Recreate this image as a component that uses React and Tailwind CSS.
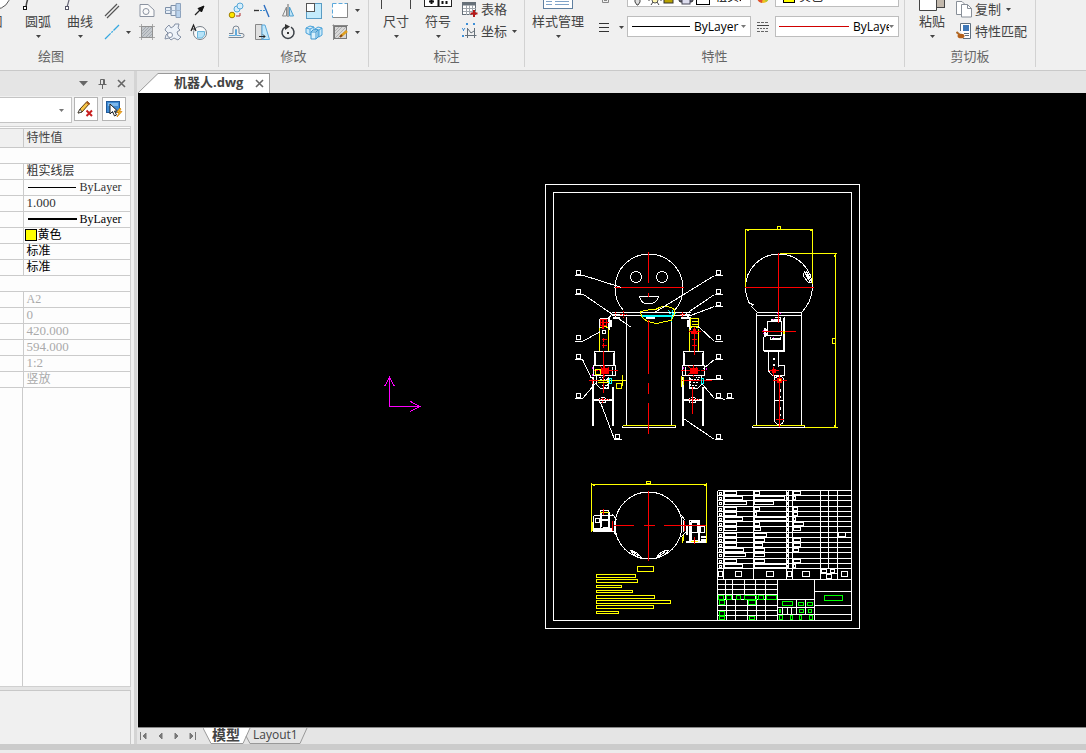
import { useState } from 'react';

const uiFont = "font-['Open_Sans','Noto_Sans_CJK_SC',sans-serif]";
const cellFont = "font-['Liberation_Serif','Noto_Sans_CJK_SC',serif]";

// ---------- ribbon pieces ----------

function Caret({ className = '' }) {
  return (
    <svg width="5" height="3" viewBox="0 0 5 3" className={`shrink-0 text-[#444] ${className}`}>
      <path d="M0 0H5L2.5 3Z" fill="currentColor" />
    </svg>
  );
}

function Icon({ children, w = 18, h = 18 }) {
  return (
    <svg width={w} height={h} viewBox={`0 0 ${w} ${h}`} fill="none" stroke="#6b7480" className="shrink-0">
      {children}
    </svg>
  );
}

const icons = {
  parallel: (
    <Icon>
      <path d="M2 15L14 3M4 17L16 5" stroke="#555" strokeWidth="1.2" />
    </Icon>
  ),
  centerLine: (
    <Icon>
      <path d="M2 16L16 2" stroke="#35a8e0" strokeWidth="1.3" strokeDasharray="8 1 2 1" />
    </Icon>
  ),
  region: (
    <Icon>
      <path d="M2 3.500H10L16 9V15.500H2Z" stroke="#8b93a0" fill="#fafafa" />
      <circle cx="8" cy="10.500" r="3" stroke="#8b93a0" />
    </Icon>
  ),
  hatch: (
    <Icon>
      <rect x="3.500" y="3.500" width="11" height="11" fill="#c4c8cc" stroke="#777" />
      <path d="M4 8L8 4M4 11L11 4M4 14L14 4M8 14L14 8M11 14L14 11" stroke="#a3a9b0" />
      <path d="M1 3.500H17M1 14.500H17M3.500 1V17M14.500 1V17" stroke="#999" strokeWidth="0.8" />
    </Icon>
  ),
  shaft: (
    <Icon>
      <path d="M1.500 6.500H7V12.500H1.500ZM7 4.500H12V14.500H7Z" fill="#e6eef7" stroke="#7e90a8" />
      <path d="M12 2.500H16.500V16.500H12Z" fill="#b9d2ec" stroke="#8ea3bd" />
      <path d="M1 9.500H17" stroke="#9fb2c8" />
    </Icon>
  ),
  gear: (
    <Icon>
      <path d="M2 5L5 2L7 5L10 3L11 1H15L14 5L16 7L13 9L14 12L17 14L14 17L10 15L7 17L5 15L1 16L2 12L4 10L1 7Z" stroke="#8591a5" fill="#edf2f8" />
      <circle cx="6" cy="12" r="2.500" stroke="#8591a5" fill="#fff" />
    </Icon>
  ),
  arrow: (
    <Icon>
      <path d="M5 14L10 9" stroke="#222" strokeWidth="1.2" />
      <path d="M14 5L8 7.500L11.500 11Z" fill="#111" stroke="#111" />
    </Icon>
  ),
  balloon: (
    <Icon>
      <circle cx="10" cy="10" r="6.500" stroke="#777f88" fill="#fafafa" />
      <path d="M7.500 8.500H14.500V12L12 15H7.500Z" fill="#b7e3f8" stroke="#6cb8dd" />
      <path d="M1 8L3.500 2L6 8M2 6H5" stroke="#222" strokeWidth="1.2" />
    </Icon>
  ),
  copyShape: (
    <Icon>
      <circle cx="5" cy="14" r="2.800" fill="#ffe800" stroke="#a08000" />
      <circle cx="10" cy="8" r="3" fill="#d7eefb" stroke="#58a8d8" />
      <circle cx="13" cy="5" r="3" fill="#d7eefb" stroke="#58a8d8" />
      <path d="M9 15H13V12" stroke="#b03030" />
    </Icon>
  ),
  trim: (
    <Icon>
      <path d="M1 9.500H6" stroke="#333" strokeWidth="1.3" />
      <path d="M7 9.500H13" stroke="#3a8fd0" strokeDasharray="2 1" />
      <path d="M11 4L16 16" stroke="#2d6fc0" strokeWidth="1.4" />
    </Icon>
  ),
  mirror: (
    <Icon>
      <path d="M7.500 6V15H3.500Z" stroke="#888" />
      <path d="M10.500 6V15H14.500Z" stroke="#4a9fd0" fill="#bfe3f6" />
      <path d="M9 3V16" stroke="#666" />
    </Icon>
  ),
  scale: (
    <Icon>
      <rect x="1.500" y="2.500" width="15" height="15" fill="#c3ebfc" stroke="#5a9cc4" />
      <rect x="1.500" y="2.500" width="8" height="8" fill="#fff" stroke="#555" />
    </Icon>
  ),
  stretch: (
    <Icon>
      <rect x="1.500" y="2.500" width="15" height="14" fill="#fff" stroke="#5aa8dc" strokeDasharray="4 2" />
      <path d="M16.500 2V16.500H2" stroke="#888" />
    </Icon>
  ),
  offset: (
    <Icon>
      <path d="M1.500 14.500H15A2 2 0 0 0 15 10.500H12V6A3 3 0 0 0 6 6V10.500H2" stroke="#7b8794" />
      <path d="M2 12.500H8.500V6.500H9.500V12.500H14" stroke="#5fa9da" />
    </Icon>
  ),
  taper: (
    <Icon>
      <path d="M2.500 1.500H9V16.500H2.500Z" fill="#e0e0e0" stroke="#888" />
      <path d="M9 2H12L16.500 16.500H9Z" fill="#c3e8fa" stroke="#5aa8dc" />
      <path d="M6 13.500H12M10 11.500L12 13.500L10 15.500" stroke="#222" />
    </Icon>
  ),
  rotate: (
    <Icon>
      <path d="M6 4.200A6 6 0 1 0 12 4.200" stroke="#3a3f45" strokeWidth="1.5" />
      <path d="M6 1L11 3.500L6 7Z" fill="#333" stroke="none" />
      <rect x="8" y="9" width="2" height="2" fill="#333" stroke="none" />
    </Icon>
  ),
  block: (
    <Icon>
      <path d="M1 5L5 3L9 4V10L5 12L1 10ZM1 5L5 6L9 4M5 6V12" stroke="#4aa3da" fill="#c9e9fa" />
      <path d="M10 6L13 4L17 5V12L14 14L10 13ZM10 6L14 7L17 5M14 7V14" stroke="#4aa3da" fill="#c9e9fa" />
      <path d="M6 9L8 7H13V14L11 16H6ZM6 9H11V16M11 9L13 7" stroke="#3f97cf" fill="#d9f0fc" />
    </Icon>
  ),
  editHatch: (
    <Icon>
      <rect x="3.500" y="3.500" width="12" height="12" fill="#d8d8d8" stroke="#777" />
      <path d="M4 8L8 4M4 11L11 4M4 15L15 4M7 15L15 7" stroke="#b0b0b0" />
      <path d="M1.500 2.500H17M2.500 1.500V17" stroke="#888" />
      <path d="M10 13L16 8" stroke="#e0a020" strokeWidth="2.500" />
      <path d="M9 14L11 12" stroke="#8a4b12" strokeWidth="2" />
    </Icon>
  ),
  table: (
    <Icon w={16} h={16}>
      <rect x="0.500" y="1.500" width="13" height="12" fill="#fff" stroke="#667079" />
      <path d="M1 3H14" stroke="#667079" strokeWidth="3" />
      <path d="M1 7.500H14M1 10.500H14M4.500 4V14M7.500 4V14M10.500 4V14" stroke="#a0a6ac" />
      <path d="M12 9V16M8.500 12.500H15.500" stroke="#b81818" strokeWidth="2" />
    </Icon>
  ),
  coord: (
    <Icon w={16} h={16}>
      <path d="M5.500 5V15M3 12.500H14.500M12.500 5V15M6 6L9 10L12 8" stroke="#667079" />
      <path d="M4 0L6 2M6 0L4 2M11 0L13 2M13 0L11 2M0 5L1.500 7L3 5M1.500 7V8M0 12L2 14M2 12L0 14" stroke="#3d8fd8" />
    </Icon>
  ),
  copy: (
    <Icon w={16} h={18}>
      <path d="M0.500 1.500H6L9 4.500V14.500H0.500Z" fill="#fff" stroke="#888f98" />
      <path d="M5.500 4.500H11.500L15.500 8.500V17H5.500Z" fill="#fff" stroke="#888f98" />
      <path d="M11.500 4.500V8.500H15.500" stroke="#888f98" />
    </Icon>
  ),
  match: (
    <Icon w={16} h={16}>
      <path d="M4.500 8V0.500H14.500V15.500H7" fill="#fff" stroke="#60707f" />
      <rect x="7" y="2" width="6" height="6" fill="#3f78b8" stroke="none" />
      <path d="M8 10.500H13M9 12.500H13" stroke="#60707f" />
      <path d="M0.500 9L4 12" stroke="#b06a28" strokeWidth="2" />
      <ellipse cx="5" cy="13" rx="3.500" ry="2.300" fill="#b5611a" stroke="none" />
    </Icon>
  ),
};

function IconButton({ name, label, wide = 'w-[26px]' }) {
  return (
    <button aria-label={label} className={`flex h-[22px] ${wide} items-center justify-center pb-px hover:bg-[#dcebf8]`}>
      {icons[name]}
    </button>
  );
}

function BigButton({ label, icon, wide = 'w-[42px]', caret = true }) {
  return (
    <button className={`flex h-[56px] ${wide} shrink-0 flex-col items-center justify-end pb-[5px] text-[13px] text-[#444]`}>
      {icon}
      <span className="leading-5 whitespace-nowrap">{label}</span>
      <Caret className={caret ? 'mt-1' : 'invisible mt-1'} />
    </button>
  );
}

function TextButton({ name, label, caret }) {
  return (
    <button className="flex h-[22px] items-center gap-[3px] pb-[2px] text-[13px] leading-5 whitespace-nowrap text-[#444]">
      {icons[name]}
      <span>{label}</span>
      {caret && <Caret className="ml-[2px]" />}
    </button>
  );
}

function Group({ title, className = '', children }) {
  return (
    <>
      <section className={`flex h-[70px] shrink-0 flex-col justify-end ${className}`}>
        <div className="flex h-11 items-end">{children}</div>
        <h2 className="h-[27px] text-center text-[13px] leading-[27px] text-[#666]">{title}</h2>
      </section>
      <div className="h-[67px] w-px shrink-0 bg-[#d2d2d2]" />
    </>
  );
}

function Combo({ label, lead, options }) {
  return (
    <div className="flex h-[21px] w-[124px] shrink-0 items-center border border-[#bdbdbd] bg-white pr-1 pl-[3px]">
      {lead}
      <select
        aria-label={label}
        className="h-[19px] min-w-0 flex-1 appearance-none bg-transparent pl-1 text-[12px] text-black outline-none"
      >
        {options.map((o) => (
          <option key={o}>{o}</option>
        ))}
      </select>
      <Caret className="text-[#777]" />
    </div>
  );
}

function Ribbon() {
  return (
    <header className="flex h-[71px] shrink-0 items-start overflow-hidden border-b border-[#c9c9c9] bg-[#f0f0f0]">
      <Group title="绘图" className="-ml-[116px] w-[334px]">
        <div className="flex flex-1 items-end justify-end pr-[6px]">
          <BigButton
            label="圆"
            caret={false}
            icon={
              <svg width="30" height="30" viewBox="0 0 30 30" className="shrink-0">
                <circle cx="15" cy="14" r="14" fill="#fff" stroke="#555" />
              </svg>
            }
          />
          <BigButton
            label="圆弧"
            icon={
              <svg width="30" height="24" viewBox="0 0 30 24" className="shrink-0">
                <path d="M3 20Q4 8 14 0" fill="none" stroke="#444" strokeWidth="1.5" />
                <rect x="0.500" y="19.500" width="3" height="3" fill="#fff" stroke="#111" />
              </svg>
            }
          />
          <BigButton
            label="曲线"
            icon={
              <svg width="30" height="24" viewBox="0 0 30 24" className="shrink-0">
                <path d="M2 20Q4 14 6 4" fill="none" stroke="#667" strokeWidth="1.2" />
                <rect x="0.500" y="19.500" width="3" height="3" fill="#fff" stroke="#556" />
              </svg>
            }
          />
          <div className="flex flex-col">
            <div className="flex">
              <IconButton name="parallel" label="平行线" wide="w-[22px]" />
              <span className="w-[11px]" />
              <IconButton name="region" label="面域" />
              <IconButton name="shaft" label="轴" />
              <IconButton name="arrow" label="箭头" />
            </div>
            <div className="flex items-center">
              <IconButton name="centerLine" label="中心线" wide="w-[22px]" />
              <span className="flex w-[11px] justify-center">
                <Caret />
              </span>
              <IconButton name="hatch" label="剖面线" />
              <IconButton name="gear" label="齿轮" />
              <IconButton name="balloon" label="局部放大" />
            </div>
          </div>
        </div>
      </Group>

      <Group title="修改" className="w-[149px]">
        <div className="flex flex-col pl-1">
          <div className="flex items-center">
            <IconButton name="copyShape" label="平移复制" />
            <IconButton name="trim" label="裁剪" />
            <IconButton name="mirror" label="镜像" />
            <IconButton name="scale" label="缩放" />
            <IconButton name="stretch" label="拉伸" />
            <Caret className="ml-[2px]" />
          </div>
          <div className="flex items-center">
            <IconButton name="offset" label="等距线" />
            <IconButton name="taper" label="延伸" />
            <IconButton name="rotate" label="旋转" />
            <IconButton name="block" label="阵列" />
            <IconButton name="editHatch" label="编辑" />
            <Caret className="ml-[2px]" />
          </div>
        </div>
      </Group>

      <Group title="标注" className="w-[155px]">
        <div className="flex items-end pl-[6px]">
          <BigButton
            label="尺寸"
            icon={
              <svg width="32" height="24" viewBox="0 0 32 24" className="shrink-0">
                <path d="M1.500 2V22M30.500 2V22" stroke="#444" />
              </svg>
            }
          />
          <BigButton
            label="符号"
            icon={
              <svg width="28" height="24" viewBox="0 0 28 24" className="mb-[2px] shrink-0">
                <rect x="0.500" y="4.500" width="27" height="17" fill="#fff" stroke="#222" />
                <path d="M14.500 5V21M7.500 14V19M5 16.500H10M18.500 16V19M22.500 16V19" stroke="#111" strokeWidth="2" />
              </svg>
            }
          />
          <div className="flex flex-col pl-[3px]">
            <TextButton name="table" label="表格" />
            <TextButton name="coord" label="坐标" caret />
          </div>
        </div>
      </Group>

      <Group title="特性" className="w-[379px]">
        <BigButton
          label="样式管理"
          wide="w-[66px]"
          icon={
            <svg width="30" height="24" viewBox="0 0 30 24" className="shrink-0">
              <rect x="0.500" y="2.500" width="29" height="19" fill="#fff" stroke="#5f7fa0" />
              <path d="M3 14.500H9M3 17.500H9M12 14.500H26M12 17.500H26" stroke="#7fa3c8" />
            </svg>
          }
        />
        <div className="flex h-11 w-9 shrink-0 flex-col items-center justify-end gap-5 pb-[11px]">
          <svg width="22" height="7" viewBox="0 0 22 7" className="shrink-0">
            <path d="M4.500 0V6.500H10.500V0M6 2.500H9M6 4.500H9" fill="none" stroke="#888" />
          </svg>
          <button aria-label="线宽" className="flex h-[9px] shrink-0 items-center gap-[10px] pl-1">
            <svg width="10" height="9" viewBox="0 0 10 9">
              <path d="M0 0.500H10M0 4.500H10M0 8.500H10" stroke="#333" />
            </svg>
            <Caret />
          </button>
        </div>
        <div className="flex h-11 shrink-0 flex-col justify-end gap-[9px] pb-[6px]">
          <Combo
            label="图层"
            options={['粗实线层']}
            lead={
              <svg width="80" height="19" viewBox="0 0 80 19" className="shrink-0">
                <path d="M4 11H9V15L7 18H6L4 15Z" fill="#ddd" stroke="#444" />
                <path d="M24 8V10M19 13H17M31 13H29M20 18L22 15M28 18L26 15" stroke="#444" />
                <circle cx="24" cy="13" r="3" fill="#fff6b0" stroke="#555" />
                <rect x="33" y="8" width="9" height="8" fill="#b9a300" stroke="#333" />
                <rect x="48" y="8" width="14" height="7" rx="2" fill="#667" stroke="#333" />
                <rect x="51" y="12" width="8" height="5" fill="#dde" stroke="#445" />
                <rect x="65.500" y="4.500" width="13" height="13" fill="#fff" stroke="#000" />
              </svg>
            }
          />
          <Combo
            label="线型"
            options={['ByLayer']}
            lead={
              <svg width="59" height="3" viewBox="0 0 59 3" className="shrink-0">
                <path d="M1 1.500H59" stroke="#000" />
              </svg>
            }
          />
        </div>
        <div className="flex h-11 w-6 shrink-0 flex-col items-center justify-end gap-[18px] pb-[10px]">
          <svg width="12" height="12" viewBox="0 0 12 12" className="shrink-0">
            <circle cx="6" cy="6" r="6" fill="#f0c020" />
            <path d="M6 6L0 6A6 6 0 0 0 5 12Z" fill="#e05030" />
            <path d="M6 6L9 11A6 6 0 0 0 12 7Z" fill="#a8c838" />
          </svg>
          <svg width="12" height="12" viewBox="0 0 12 12" className="shrink-0">
            <path d="M0 1.500H12M0 10.500H12" stroke="#666" strokeDasharray="3 1" />
            <path d="M0 4.500H12" stroke="#444" />
            <path d="M0 7.500H12" stroke="#666" strokeDasharray="2 1" />
          </svg>
        </div>
        <div className="flex h-11 shrink-0 flex-col justify-end gap-[9px] pb-[6px]">
          <Combo
            label="颜色"
            options={['黄色']}
            lead={<span className="ml-1 size-3 shrink-0 border border-black bg-[#ffff00]" />}
          />
          <Combo
            label="线色"
            options={['ByLayer']}
            lead={
              <svg width="70" height="3" viewBox="0 0 70 3" className="shrink-0">
                <path d="M0 1.500H70" stroke="#d00000" />
              </svg>
            }
          />
        </div>
      </Group>

      <Group title="剪切板" className="w-[130px]">
        <div className="flex items-end pl-[6px]">
          <BigButton
            label="粘贴"
            icon={
              <svg width="26" height="24" viewBox="0 0 26 24" className="shrink-0">
                <rect x="16" y="0" width="9.500" height="20.500" fill="#c2b8ac" stroke="#444" />
                <path d="M0.500 0V23.500H17.500V0" fill="#fff" stroke="#444" />
              </svg>
            }
          />
          <div className="flex flex-col pl-[3px]">
            <TextButton name="copy" label="复制" caret />
            <TextButton name="match" label="特性匹配" />
          </div>
        </div>
      </Group>
    </header>
  );
}

// ---------- property panel ----------

const props = [
  null,
  { name: '图层', value: '粗实线层', tone: 'text-[#333]' },
  { name: '线型', line: 1, value: 'ByLayer', tone: 'text-[#333]' },
  { name: '比例', value: '1.000', tone: 'text-[#333]', num: true },
  { name: '线宽', line: 2, value: 'ByLayer', tone: 'text-black' },
  { name: '颜色', swatch: true, value: '黄色', tone: 'text-black' },
  { name: '文本风格', value: '标准', tone: 'text-black' },
  { name: '标注风格', value: '标准', tone: 'text-black' },
  null,
  { name: '图幅', value: 'A2', tone: 'text-[#aaa]' },
  { name: '加长', value: '0', tone: 'text-[#aaa]', num: true },
  { name: '高度', value: '420.000', tone: 'text-[#aaa]', num: true },
  { name: '宽度', value: '594.000', tone: 'text-[#aaa]', num: true },
  { name: '图纸比例', value: '1:2', tone: 'text-[#aaa]', num: true },
  { name: '方向', value: '竖放', tone: 'text-[#aaa]' },
];

function PropertyPanel() {
  return (
    <aside className="flex w-[134px] shrink-0 flex-col bg-[#f0f0f0]">
      <div className="flex h-[25px] shrink-0 items-center justify-end gap-[10px] bg-[#e5e5e5] pr-2 text-[#666]">
        <button aria-label="菜单">
          <svg width="9" height="5" viewBox="0 0 9 5" className="block">
            <path d="M0 0H9L4.500 5Z" fill="currentColor" />
          </svg>
        </button>
        <button aria-label="固定">
          <svg width="9" height="10" viewBox="0 0 9 10" className="block" fill="none" stroke="currentColor">
            <path d="M2.500 0.500H6.500V5.500H2.500ZM5.500 0V5M0.500 5.500H8.500M4.500 6V10" />
          </svg>
        </button>
        <button aria-label="关闭">
          <svg width="9" height="9" viewBox="0 0 9 9" className="block" fill="none" stroke="currentColor" strokeWidth="1.6">
            <path d="M1 1L8 8M8 1L1 8" />
          </svg>
        </button>
      </div>

      <div className="flex shrink-0 items-start gap-[2px] pt-px pr-2 pb-[3px]">
        <div className="flex h-[26px] min-w-0 flex-1 items-center border border-l-0 border-[#c4c4c4] bg-white pr-[7px]">
          <select aria-label="选择对象" className="h-6 min-w-0 flex-1 appearance-none bg-transparent outline-none">
            <option></option>
          </select>
          <Caret className="text-[#777]" />
        </div>
        <button aria-label="取消选择" className="flex size-6 shrink-0 items-center justify-center border border-[#b4b4b4] bg-white">
          <svg width="18" height="18" viewBox="0 0 18 18" className="shrink-0">
            <path d="M1 13L3 9L10 1.500L12.500 3.500L5 12Z" fill="#f7c545" stroke="#5a3a10" />
            <path d="M9.500 2L12.500 4.500" stroke="#a85a20" strokeWidth="2" />
            <path d="M1 13L3 9L5 12Z" fill="#fff" stroke="#333" strokeWidth="0.800" />
            <path d="M9.500 10.500L15 16M15 10.500L9.500 16" stroke="#c81e1e" strokeWidth="2" />
          </svg>
        </button>
        <button aria-label="快速选择" className="ml-[2px] flex size-6 shrink-0 items-center justify-center border border-[#b4b4b4] bg-white">
          <svg width="18" height="18" viewBox="0 0 18 18" className="shrink-0">
            <rect x="1.500" y="1.500" width="13" height="11" fill="#3f8bd4" stroke="#1f5a9c" />
            <rect x="3" y="3" width="10" height="3" fill="#7db8ec" />
            <path d="M5 4V14L7.500 11.500L9.500 16L11.500 15L9.500 11H12.500Z" fill="#fff" stroke="#222" />
            <path d="M15 8L11.500 12.500H14L12 17L17 11.500H14.500L16 9Z" fill="#ffc020" stroke="#d07a00" strokeWidth="0.700" />
          </svg>
        </button>
      </div>

      <div className="mr-[3px] flex min-h-0 flex-1 flex-col border-t border-r border-[#d0d0d0] bg-[#fdfdfd] pt-px">
        <table className={`w-full table-fixed border-collapse text-[12px] leading-[14px] ${cellFont}`}>
          <colgroup>
            <col className="w-[23px]" />
            <col />
          </colgroup>
          <thead>
            <tr className="h-[19px] bg-[#f0f0f0] text-left text-[#444]">
              <th className="border-t border-r border-b border-[#c8c8c8] p-0" />
              <th className="border-t border-b border-[#c8c8c8] p-0 pl-[3px] font-normal">特性值</th>
            </tr>
          </thead>
          <tbody>
            {props.map((row, i) =>
              row ? (
                <tr key={row.name} className={`h-4 ${row.tone}`}>
                  <td className="border-r border-b border-[#cbcbcb] p-0" />
                  <td className="border-b border-[#cbcbcb] p-0 pl-px">
                    <div className="flex h-[15px] items-center pb-px whitespace-nowrap">
                      {row.line && (
                        <svg width="50" height="3" viewBox="0 0 50 3" className="mr-px ml-[2px] shrink-0">
                          <path d={row.line === 1 ? 'M1 1.500H49' : 'M1 1H50'} stroke="#000" strokeWidth={row.line} />
                        </svg>
                      )}
                      {row.swatch && <span className="-mr-px size-3 shrink-0 border border-black bg-[#ffff00]" />}
                      <span className={row.num ? 'ml-[2px] text-[13px]' : 'ml-[2px]'}>{row.value}</span>
                    </div>
                  </td>
                </tr>
              ) : (
                <tr key={i} className="h-4">
                  <td colSpan={2} className="border-b border-[#cbcbcb] p-0" />
                </tr>
              )
            )}
          </tbody>
        </table>
        <div className="w-[23px] flex-1 border-r border-[#cbcbcb]" />
      </div>
      <div className="mr-[3px] h-1 shrink-0 border-t border-[#d0d0d0] bg-[#e5e5e5]" />
      <div className="mr-[3px] h-[54px] shrink-0 border-t border-r border-[#c8c8c8]" />
    </aside>
  );
}

// ---------- drawing ----------

// callout: box position, underline y, leader start x, leader to the part
const callouts = [
  [576, 270, 583, 275, 621, 287],
  [576, 289, 583, 294, 631, 327],
  [576, 335, 582, 341, 600, 331],
  [576, 354, 582, 359, 591, 378],
  [576, 393, 582, 398, 595, 383],
  [615, 434, 614, 439, 600, 402],
  [716, 270, 714, 275, 654, 312],
  [716, 289, 714, 294, 686, 313],
  [716, 302, 714, 306, 690, 315],
  [716, 335, 714, 341, 698, 326],
  [716, 354, 714, 359, 703, 368],
  [716, 375, 714, 379, 705, 379],
  [716, 393, 714, 398, 702, 384],
  [716, 434, 714, 439, 683, 418],
];

const notes = [
  [574, 39, 3],
  [579, 41, 3],
  [585, 25, 2],
  [590, 36, 2],
  [595, 58, 3],
  [600, 74, 3],
  [605, 57, 3],
  [611, 22, 2],
];

// parts list: end x of the text block in each of the three text columns
const parts = [
  [736, 759, 800],
  [742, 784, 795],
  [746, 773, 0],
  [736, 759, 797],
  [736, 756, 797],
  [742, 786, 795],
  [736, 759, 803],
  [736, 760, 800],
  [736, 766, 0],
  [736, 764, 800],
  [736, 762, 800],
  [743, 764, 798],
  [745, 764, 0],
  [736, 764, 800],
  [742, 786, 795],
];

const greens = [
  [718, 595, 5, 4], [726, 595, 5, 4], [736, 595, 4, 4], [744, 595, 12, 4], [758, 595, 5, 4], [766, 595, 10, 4],
  [719, 600, 5, 4], [748, 600, 7, 4], [719, 611, 5, 4], [719, 616, 5, 3], [749, 616, 5, 3],
  [782, 601, 10, 4], [798, 602, 5, 3], [807, 602, 5, 3], [779, 609, 1, 3], [799, 609, 4, 3], [808, 609, 3, 3],
  [779, 615, 3, 4], [790, 615, 2, 4], [799, 615, 2, 4], [809, 615, 3, 4], [824, 595, 18, 5],
];

function Arm({ flip }) {
  return (
    <g transform={flip ? 'translate(1297 0) scale(-1 1)' : undefined}>
      <path d="M599 318H608M599 318V327M611 314L608 318" stroke="#fff" />
      <path d="M608 316V329M610 319V326" stroke="#fff" strokeWidth="2" />
      <path d="M599 328V351M608 328V351M599 328Q604 324 608 328" stroke="#ff0" />
      <path d="M594 351H614V365H594ZM595 352V365M613 352V365" stroke="#fff" />
      <path d="M593 365H615V375H593ZM612 366V375M596 375V384L600 388H608V376" stroke="#fff" />
      <path d="M599 379H607M600 382H606M601 385H607M598 377H602M603 387H608M599 375H608M607 377V387" stroke="#fff" strokeDasharray="2 1" />
      <rect x="600" y="367" width="8" height="6" fill="#f00" stroke="none" />
      <path d="M593 370H618M604 364V376M600 366L609 374M609 366L600 374" stroke="#f00" strokeDasharray="4 1" />
      <path d="M601 339H606M603 337V341M601 345H606M603 342V347" stroke="#f00" />
    </g>
  );
}

// pair of fingers below each forearm
function Legs({ x }) {
  return (
    <g stroke="#fff">
      <path d={`M${x} 376V425M${x + 1} 376V425M${x + 20} 386V425M${x + 21} 386V425`} />
      <path d={`M${x} 399H${x + 20}M${x} 400H${x + 20}`} />
      <path d={`M${x + 7} 397V402M${x + 13} 397V402M${x + 8} 397H${x + 12}M${x + 8} 402H${x + 12}`} />
      <path d={`M${x + 6} 399H${x + 16}M${x + 10} 397V403`} stroke="#f00" strokeDasharray="2 1" />
    </g>
  );
}

function Robot() {
  return (
    <>
      {/* front view */}
      <path d="M623 310A34 34 0 1 1 674 310" stroke="#fff" />
      <circle cx="635.500" cy="276.500" r="5.500" stroke="#fff" />
      <circle cx="661.500" cy="276.500" r="5.500" stroke="#fff" />
      <path d="M639 296H658Q657 303 648 303.500Q640 303 639 296Z" stroke="#fff" />
      <path d="M626 316V425M671 316V425M622 427H675M622 425V427M675 425V427" stroke="#fff" />
      <path d="M622 425H675" stroke="#ff0" />
      <path d="M611 312H690M611 315H690" stroke="#fff" />
      <path d="M611 314H622M645 317H654M679 314H689M612 317H619M680 317H688" stroke="#fff" strokeWidth="2" />
      <path d="M615 311V317M623 310V317M682 311V317M619 314H626M679 314H686" stroke="#f00" strokeDasharray="2 1" />
      <path d="M641 315H671M641 316H671M671 315V321" stroke="#0ff" />
      <path d="M668 310L675 315M668 313H675M672 309V316" stroke="#0ff" strokeDasharray="2 1" />
      <path d="M640 311Q648 309 655 309Q663 304 670 307Q676 309 674 313Q672 318 671 320Q663 321 657 323Q645 322 641 316Z" stroke="#ff0" />
      <path d="M648 251V282M648 292V296M614 287H683M648 319V373M648 382V393M648 402V433" stroke="#f00" />

      <Arm />
      <Arm flip />
      <Legs x={592} />
      <Legs x={682} />
      <rect x="600" y="319" width="6" height="6" stroke="#f00" />
      <path d="M599 322H608M602 318V328M603 318V328M603 350V371M603 371V392" stroke="#f00" />
      <rect x="602" y="330" width="3" height="3" stroke="#fff" />
      <rect x="690" y="318" width="8" height="8" stroke="#ff0" />
      <path d="M691 321H697M691 324H697" stroke="#ff0" />
      <path d="M694 326V354M688 331H700M694 328L691 333H697Z" fill="#f00" stroke="#f00" />
      <path d="M588 380H610M592 383V378M681 380H711M692 386V413" stroke="#f00" />
      <path d="M597 380H625M597 382H608M622 374V385M595 369H600V374H595ZM616 383H621V388H616Z" stroke="#ff0" />
      <path d="M681 375V386M683 376V384" stroke="#ff0" />
      <path d="M609 378H611V383H609ZM701 378H703V383H701Z" stroke="#0ff" />
      <path d="M592 366V368M592 373V375M683 366V368M706 367V369" stroke="#f0f" />

      {/* side view */}
      <path d="M757 312L751 306L753 304L749 303A34 34 0 0 1 745 287A33.500 33.500 0 0 1 812 287Q811 302 801 312" stroke="#fff" />
      <path d="M803 273V276L808 282H811L809 277L806 271ZM805 273L810 282M807 275L811 281M804 271L808 279" stroke="#fff" />
      <path d="M756 312H801M756 315H801M756 312V425M801 312V425M752 427H804M752 425V427M804 425V427" stroke="#fff" />
      <path d="M752 425H804" stroke="#ff0" />
      <path d="M763 336V350H784V316M763 351H784M783 317V350M767 321H781V335H767ZM774 317H780V320M770 336V339H780V336" stroke="#fff" />
      <path d="M770 319H780M771 338H780M764 327V336M783 326V336" stroke="#fff" strokeWidth="2" />
      <path d="M766 328V335" stroke="#fff" strokeWidth="2" strokeDasharray="3 1" />
      <path d="M768 351V370Q770 375 774 375H778M778 351V366M778 365H784V375H778" stroke="#fff" />
      <path d="M773 357V359M773 363V365" stroke="#fff" strokeWidth="2" />
      <path d="M774 375V420Q775 424 779 424Q783 423 783 420V378Q779 373 774 378M774 400H783M780 388V391M780 395V397M780 406V409M780 413V415" stroke="#fff" />
      <rect x="777" y="226" width="3" height="3" stroke="#ff0" />
      <rect x="832" y="338" width="3" height="5" stroke="#ff0" />
      <path d="M745 229H812M745 228V287M812 228V283M779 253H836M835 253V427M804 427H837M746 230H748M809 230H811M834 254V256M834 424V426" stroke="#ff0" />
      <path d="M744 287H813M778 252V322M761 331H795M768 370H778M773 366V375M772 380H786M779 374V426M775 419H783" stroke="#f00" />
      <path d="M772 369H775V372H772ZM777 378H781V382H777Z" fill="#f00" stroke="#f00" />
      <path d="M778 379H780M783 330V333" stroke="#ff0" strokeWidth="2" />
      <path d="M772 319H774M772 337H774M763 329V334M776 313H782" stroke="#f0f" strokeDasharray="1 2" />

      {/* top view */}
      <circle cx="648" cy="525" r="33.500" stroke="#fff" />
      <path d="M630 550Q635 550 641 557Q634 557 630 550ZM632 551L639 556M668 550Q660 550 656 557Q664 556 668 550ZM665 551L658 556" stroke="#fff" />
      <path d="M593 515H613M593 515V531H612M600 510H608V531H600ZM602 519H607M602 527H607M612 514L617 520M613 531L617 537" stroke="#fff" />
      <path d="M593 528H612M593 530H612M600 512V526M608 511V528M600 519H608" stroke="#fff" strokeWidth="2" />
      <path d="M595 518H599V522H595ZM614 520V531" stroke="#fff" />
      <path d="M689 520H699V540H689ZM691 522H697V532H691ZM700 526H704V532H700ZM680 514L685 520M680 537L685 532M683 519V531" stroke="#fff" />
      <path d="M685 541H706M700 536H706M700 539H706M690 521H699M690 521V540M698 521V540M686 524V534" stroke="#fff" strokeWidth="2" />
      <rect x="646" y="481" width="4" height="2" stroke="#ff0" />
      <path d="M591 484H706M591 482V531M706 482V542M592 485H594M703 485H705M599 512H608M592 521V530M682 536V542M683 534V540M690 541H697" stroke="#ff0" />
      <path d="M648 490V560M613 525H633M643 525H654M663 525H705M603 508V514M612 520V530M684 520V530M694 536V543" stroke="#f00" />

      {callouts.map(([x, y, lx, ly, tx, ty]) => (
        <g key={`${x}-${y}`} stroke="#fff">
          <rect x={x} y={y} width="4" height={ly - y > 5 ? 4 : ly - y - 1} />
          <path d={`M${x - 2} ${ly}H${x + 6}M${lx} ${ly}L${tx} ${ty}`} />
        </g>
      ))}
      <path d="M727 393H731V397H727ZM725 398H733M722 398L725 400" stroke="#fff" />
    </>
  );
}

function TitleBlock() {
  const rowY = (i) => Math.round(490 + i * 5.2);
  return (
    <>
      <g stroke="#fff">
        {parts.map(([a, b, c], i) => (
          <g key={i}>
            <path d={`M717 ${rowY(i)}H851`} />
            <rect x="719" y={rowY(i) + 2} width="2" height="2" />
            <rect x="724" y={rowY(i) + 1} width={a - 724} height="3" />
            <rect x="754" y={rowY(i) + 1} width={b - 754} height="3" />
            <rect x="787" y={rowY(i) + 2} width="1" height="2" />
            {c > 0 && <rect x="793" y={rowY(i) + 1} width={c - 793} height="3" />}
          </g>
        ))}
        <rect x="838" y="532" width="7" height="4" />
        <path d="M717 568H851M717 579H851M717 490V620M723 490V579M753 490V579M786 490V579M788 490V568M792 490V579M820 490V579M828 490V568M837 490V579" />
        <path d="M718 571H722V576H718ZM735 571H741V576H735ZM766 571H773V576H766ZM787 571H791V576H787ZM802 571H809V576H802ZM841 571H847V576H841ZM821 569H826V572H821ZM830 569H834V572H830ZM826 574H831V578H826ZM820 573H837" />
        <path d="M717 584H777M717 589H777M717 594H777M717 599H814M717 605H777M717 610H777M717 615H777M777 579V620M814 579V620" />
        <path d="M725 579V599M732 579V599M744 579V599M755 579V599M765 579V620M726 599V620M735 599V620M747 599V620M756 599V620" />
        <path d="M777 607H814M777 614H851M796 599V614M805 599V614M782 607V614M787 607V614M791 607V614M814 591H851M814 605H851" />
      </g>
      <g stroke="#0f0">
        {greens.map(([x, y, w, h]) => (
          <rect key={`${x}-${y}`} x={x} y={y} width={w} height={h} />
        ))}
      </g>
    </>
  );
}

function Canvas() {
  return (
    <div className="min-h-0 flex-1 bg-black">
      <svg
        className="block h-full w-full"
        viewBox="138 93 948 634"
        preserveAspectRatio="xMidYMid meet"
        fill="none"
        shapeRendering="crispEdges"
        role="img"
        aria-label="机器人"
      >
        <g transform="translate(0.5 0.5)">
          <g stroke="#fff">
            <rect x="545" y="184" width="314" height="444" />
            <rect x="553" y="192" width="298" height="428" />
          </g>
          <path d="M389 377V406H419M384 386L389 377L394 386M410 401L419 406L410 411" stroke="#f0f" />
          <Robot />
          <g stroke="#ff0">
            <rect x="637" y="566" width="16" height="5" />
            {notes.map(([y, w, h]) => (
              <rect key={y} x="596" y={y} width={w} height={h} />
            ))}
          </g>
          <TitleBlock />
        </g>
      </svg>
    </div>
  );
}

function SheetTabs() {
  const [active, setActive] = useState('模型');
  const arrows = [
    ['首页', 'M1.500 1V9M7 2V8L4 5Z'],
    ['上一页', 'M7 2V8L4 5Z'],
    ['下一页', 'M4 2V8L7 5Z'],
    ['末页', 'M8.500 1V9M3 2V8L6 5Z'],
  ];
  return (
    <nav className="flex h-[17px] shrink-0 items-center border-t border-[#888] bg-[#e5e5e5]">
      <div className="flex items-center gap-[6px] pl-px">
        {arrows.map(([label, d]) => (
          <button key={label} aria-label={label}>
            <svg width="10" height="10" viewBox="0 0 10 10" className="block">
              <path d={d} fill="#777" stroke="#777" />
            </svg>
          </button>
        ))}
      </div>
      <div className="ml-[6px] flex h-4">
        <div className="flex">
          <svg width="9" height="16" viewBox="0 0 9 16">
            <path d="M0 0L8 15.500H9V0Z" fill="#fff" />
            <path d="M0 0L8 15.500H9" fill="none" stroke="#999" />
          </svg>
          <button
            onClick={() => setActive('模型')}
            aria-pressed={active === '模型'}
            className="h-4 border-b border-[#999] bg-white pb-[2px] text-[14px] leading-[13px] font-bold text-[#444]"
          >
            模型
          </button>
          <svg width="12" height="16" viewBox="0 0 12 16">
            <path d="M0 0H10L3 15.500H0Z" fill="#fff" />
            <path d="M10 0L3 15.500H0M6 8L10 15.500H12" fill="none" stroke="#999" />
          </svg>
        </div>
        <button
          onClick={() => setActive('Layout1')}
          aria-pressed={active === 'Layout1'}
          className="h-4 border-b border-[#999] px-px pb-px text-[12px] leading-[14px] text-[#444]"
        >
          Layout1
        </button>
        <svg width="9" height="16" viewBox="0 0 9 16">
          <path d="M8 0L1 15.500H0" fill="none" stroke="#999" />
        </svg>
      </div>
    </nav>
  );
}

export default function App() {
  return (
    <div className={`flex h-screen w-full flex-col overflow-hidden bg-[#f0f0f0] ${uiFont}`}>
      <Ribbon />
      <div className="flex min-h-0 flex-1">
        <PropertyPanel />
        <div className="w-1 shrink-0 border-r border-[#e5e5e5] bg-[#d4d4d4]" />
        <main className="flex min-w-0 flex-1 flex-col">
          <div className="flex h-[22px] shrink-0 items-end bg-[#e5e5e5]">
            <svg width="21" height="20" viewBox="0 0 21 20" className="shrink-0">
              <path d="M0 20L20 0.500H21V20Z" fill="#fff" />
              <path d="M0 20L20 0.500H21" fill="none" stroke="#999" />
            </svg>
            <div className="flex h-5 items-center gap-3 border-t border-r border-[#999] bg-white pr-[5px] pl-[15px]">
              <span className="pb-[2px] text-[13px] leading-[17px] font-bold text-[#444]">机器人.dwg</span>
              <button aria-label="关闭文档">
                <svg width="9" height="9" viewBox="0 0 9 9" className="block" fill="none" stroke="#666" strokeWidth="1.6">
                  <path d="M1 1L8 8M8 1L1 8" />
                </svg>
              </button>
            </div>
          </div>
          <Canvas />
          <SheetTabs />
        </main>
      </div>
      <footer className="h-[9px] shrink-0 border-t-[6px] border-[#cbcbcb] bg-[#ececec]" />
    </div>
  );
}
